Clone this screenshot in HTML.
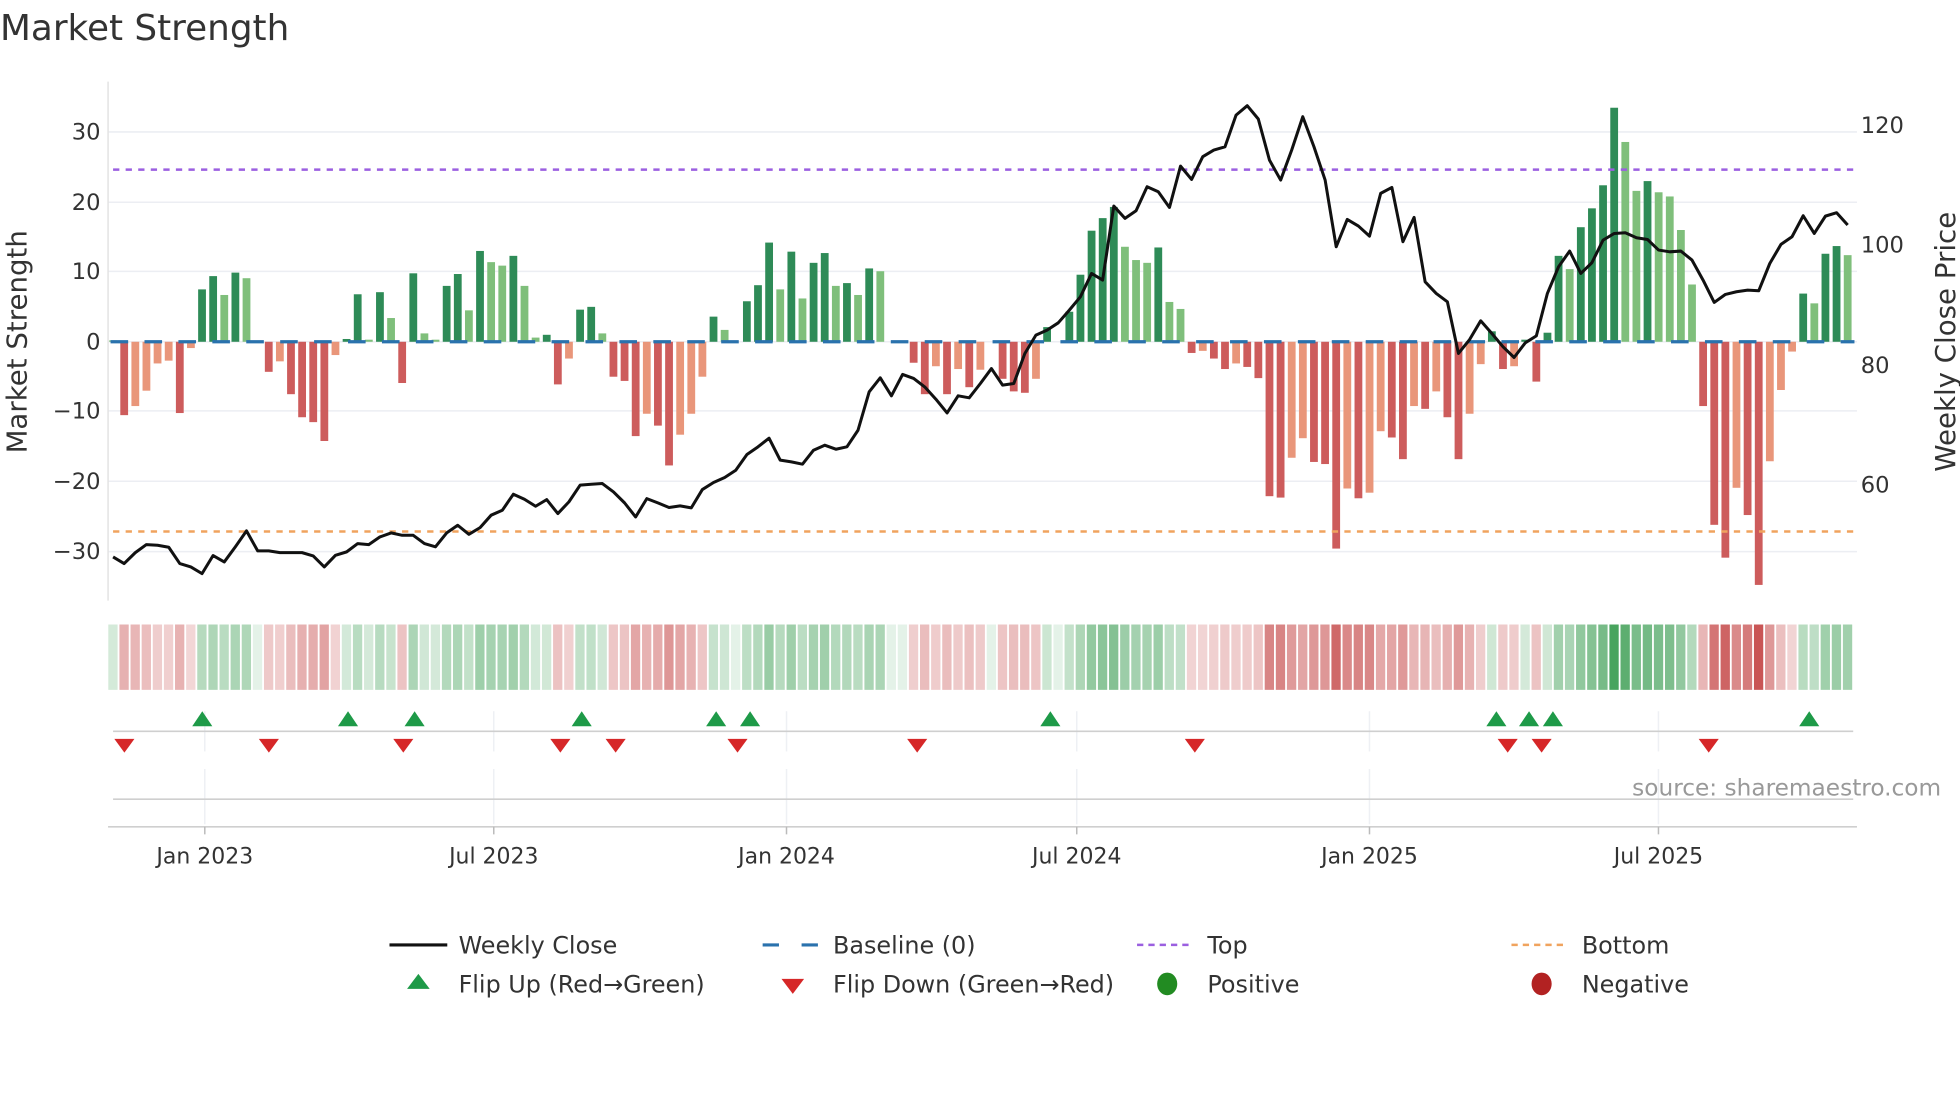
<!DOCTYPE html>
<html><head><meta charset="utf-8"><style>
html,body{margin:0;padding:0;background:#fff;}
svg{display:block;}
text{font-family:"DejaVu Sans","Liberation Sans",sans-serif;fill:#333;}
</style></head><body>
<svg id="s" width="1960" height="1102" viewBox="0 0 1560 877" preserveAspectRatio="none" xmlns="http://www.w3.org/2000/svg">
<rect width="1560" height="877" fill="#fff"/>
<text x="0" y="32" font-size="28.5">Market Strength</text>
<g stroke="#eceef3" stroke-width="1.2">
<line x1="86" x2="1478" y1="105" y2="105"/><line x1="86" x2="1478" y1="161" y2="161"/>
<line x1="86" x2="1478" y1="216" y2="216"/><line x1="86" x2="1478" y1="272" y2="272"/>
<line x1="86" x2="1478" y1="327" y2="327"/><line x1="86" x2="1478" y1="383" y2="383"/>
<line x1="86" x2="1478" y1="439" y2="439"/>
</g>
<line x1="86" x2="86" y1="65" y2="478" stroke="#e3e3e3" stroke-width="1.2"/>
<g font-size="18" text-anchor="end">
<text x="80" y="111">30</text><text x="80" y="167">20</text><text x="80" y="222">10</text>
<text x="80" y="278">0</text><text x="80" y="333">−10</text><text x="80" y="389">−20</text><text x="80" y="445">−30</text>
</g>
<g font-size="18">
<text x="1481" y="106">120</text><text x="1481" y="201">100</text><text x="1481" y="297">80</text><text x="1481" y="392">60</text>
</g>
<text transform="translate(21,272) rotate(-90)" font-size="22" text-anchor="middle">Market Strength</text>
<text transform="translate(1556,272) rotate(-90)" font-size="22" text-anchor="middle">Weekly Close Price</text>
<g id="bars"></g>
<line x1="88" x2="1476" y1="272" y2="272" stroke="#2a72ad" stroke-width="2.6" stroke-dasharray="14 13"/>
<line x1="90" x2="1476" y1="135" y2="135" stroke="#9b5fe0" stroke-width="2" stroke-dasharray="5 5"/>
<line x1="90" x2="1476" y1="423" y2="423" stroke="#f0a35e" stroke-width="2" stroke-dasharray="5 5"/>
<path id="pl" fill="none" stroke="#111" stroke-width="2.4" stroke-linejoin="round"/>
<g id="heat"></g>
<g stroke="#eef0f4" stroke-width="1.2">
<line x1="163" x2="163" y1="566" y2="598"/><line x1="393" x2="393" y1="566" y2="598"/><line x1="626" x2="626" y1="566" y2="598"/>
<line x1="857" x2="857" y1="566" y2="598"/><line x1="1090" x2="1090" y1="566" y2="598"/><line x1="1320" x2="1320" y1="566" y2="598"/>
<line x1="163" x2="163" y1="612" y2="656"/><line x1="393" x2="393" y1="612" y2="656"/><line x1="626" x2="626" y1="612" y2="656"/>
<line x1="857" x2="857" y1="612" y2="656"/><line x1="1090" x2="1090" y1="612" y2="656"/><line x1="1320" x2="1320" y1="612" y2="656"/>
</g>
<line x1="90" x2="1475" y1="582" y2="582" stroke="#cfcfcf" stroke-width="1.3"/>
<line x1="90" x2="1475" y1="636" y2="636" stroke="#cfcfcf" stroke-width="1.3"/>
<line x1="86" x2="1478" y1="658" y2="658" stroke="#cfcfcf" stroke-width="1.3"/>
<g stroke="#bbb" stroke-width="1.2">
<line x1="163" x2="163" y1="658" y2="664"/><line x1="393" x2="393" y1="658" y2="664"/><line x1="626" x2="626" y1="658" y2="664"/>
<line x1="857" x2="857" y1="658" y2="664"/><line x1="1090" x2="1090" y1="658" y2="664"/><line x1="1320" x2="1320" y1="658" y2="664"/>
</g>
<g id="flips"></g>
<text x="1545" y="633" font-size="18.5" text-anchor="end" style="fill:#999">source: sharemaestro.com</text>
<g font-size="17.5" text-anchor="middle">
<text x="163" y="687">Jan 2023</text><text x="393" y="687">Jul 2023</text><text x="626" y="687">Jan 2024</text>
<text x="857" y="687">Jul 2024</text><text x="1090" y="687">Jan 2025</text><text x="1320" y="687">Jul 2025</text>
</g>
<g font-size="19">
<line x1="310" x2="356" y1="752" y2="752" stroke="#111" stroke-width="2.4"/>
<text x="365" y="759">Weekly Close</text>
<line x1="607" x2="651" y1="752" y2="752" stroke="#2a72ad" stroke-width="2.4" stroke-dasharray="13 18"/>
<text x="663" y="759">Baseline (0)</text>
<line x1="905" x2="949" y1="752" y2="752" stroke="#9b5fe0" stroke-width="2" stroke-dasharray="5 4"/>
<text x="961" y="759">Top</text>
<line x1="1203" x2="1247" y1="752" y2="752" stroke="#f0a35e" stroke-width="2" stroke-dasharray="5 4"/>
<text x="1259" y="759">Bottom</text>
<polygon points="324,787 342,787 333,775" fill="#1e9a48"/>
<text x="365" y="790">Flip Up (Red→Green)</text>
<polygon points="622,779 640,779 631,791" fill="#d62728"/>
<text x="663" y="790">Flip Down (Green→Red)</text>
<ellipse cx="929" cy="783" rx="8" ry="9" fill="#228b22"/>
<text x="961" y="790">Positive</text>
<ellipse cx="1227" cy="783" rx="8" ry="9" fill="#b22222"/>
<text x="1259" y="790">Negative</text>
</g>
</svg>
<script>
var V=[0.2,-10.5,-9.2,-7,-3.1,-2.7,-10.2,-0.9,7.5,9.4,6.7,9.9,9.1,0,-4.3,-2.8,-7.5,-10.8,-11.5,-14.2,-1.9,0.4,6.8,0.3,7.1,3.4,-5.9,9.8,1.2,0.3,8,9.7,4.5,13,11.4,10.9,12.3,8,0.6,1,
-6.1,-2.4,4.6,5,1.2,-5,-5.6,-13.5,-10.3,-12,-17.7,-13.3,-10.3,-5,3.6,1.7,0,5.8,8.1,14.2,7.5,12.9,6.2,11.3,12.7,8,8.4,6.7,10.5,10.1,0,0,-3,-7.5,-3.5,-7.5,-3.9,-6.5,-4,0,
-5.3,-7.1,-7.3,-5.3,2.1,0,4.3,9.6,15.9,17.7,19.3,13.6,11.7,11.3,13.5,5.7,4.7,-1.6,-1.3,-2.4,-3.9,-3.1,-3.6,-5.2,-22.1,-22.3,-16.6,-13.8,-17.2,-17.5,-29.6,-21,-22.4,-21.6,-12.8,-13.7,-16.8,-9.2,-9.6,-7.1,
-10.8,-16.8,-10.3,-3.2,1.5,-3.9,-3.5,0.3,-5.7,1.3,12.3,10.4,16.4,19.1,22.4,33.5,28.6,21.6,23,21.4,20.8,16,8.2,-9.2,-26.2,-30.9,-20.9,-24.8,-34.8,-17.1,-6.9,-1.4,6.9,5.5,12.6,13.7,12.4];
var Y=[1370,1390,1357,1333,1335,1341,1390,1400,1420,1366,1385,1340,1292,1352,1352,1357,1357,1357,1367,1400,1365,1355,1330,1333,1310,1298,1305,1305,1330,1340,1298,1275,1302,1282,1245,1230,1182,1197,1218,1198,
1240,1205,1155,1152,1150,1175,1208,1250,1195,1208,1222,1217,1223,1168,1147,1132,1110,1063,1040,1014,1080,1085,1092,1050,1035,1047,1040,990,875,833,887,823,835,860,897,938,887,893,850,805,
855,850,760,705,690,668,630,590,520,540,318,355,332,260,275,322,198,238,170,150,140,45,17,57,180,240,150,50,140,240,440,358,378,408,280,262,425,352,545,580,
605,760,718,662,700,740,772,728,707,580,500,453,520,488,420,400,398,413,418,450,455,453,480,540,607,583,575,570,572,490,433,410,347,400,348,338,375];
var NS="http://www.w3.org/2000/svg";
function el(p,t,a){var e=document.createElementNS(NS,t);for(var k in a)e.setAttribute(k,a[k]);p.appendChild(e);return e;}
var bars=document.getElementById('bars'),heat=document.getElementById('heat');
var d="";
for(var i=0;i<V.length;i++){
 var x=90+8.85*i,v=V[i],p=i?V[i-1]:0,c;
 if(v>0)c=(v>=p&&i>0)?"#2e8b57":"#7fbf7b";else c=(v<=p)?"#cd5c5c":"#e9967a";
 if(v!==0){var h=Math.abs(v)*5.56;el(bars,'rect',{x:x-3.1,y:v>0?272-h:272,width:6.2,height:h,fill:c});}
 var a=0.2+0.7*Math.min(Math.abs(v)/35,1),b;
 if(v>0)b=[45,150,70];else if(v<0)b=[195,65,65];else{b=[120,190,140];a=0.2;}
 var col="rgb("+b.map(function(q){return Math.round(255*(1-a)+q*a)}).join(",")+")";
 el(heat,'rect',{x:x-3.8,y:497,width:7.4,height:52,fill:col});
 var yy=(100+Y[i]/3)/1.256;
 d+=(i?"L":"M")+x.toFixed(1)+" "+yy.toFixed(1);
}
document.getElementById('pl').setAttribute('d',d);
var fl=document.getElementById('flips');
[161,277,330,463,570,597,836,1191,1217,1236,1440].forEach(function(x){el(fl,'polygon',{points:(x-8)+",578 "+(x+8)+",578 "+x+",566",fill:"#1e9a48"});});
[99,214,321,446,490,587,730,951,1200,1227,1360].forEach(function(x){el(fl,'polygon',{points:(x-8)+",588 "+(x+8)+",588 "+x+",599",fill:"#d62728"});});
</script>
</body></html>
